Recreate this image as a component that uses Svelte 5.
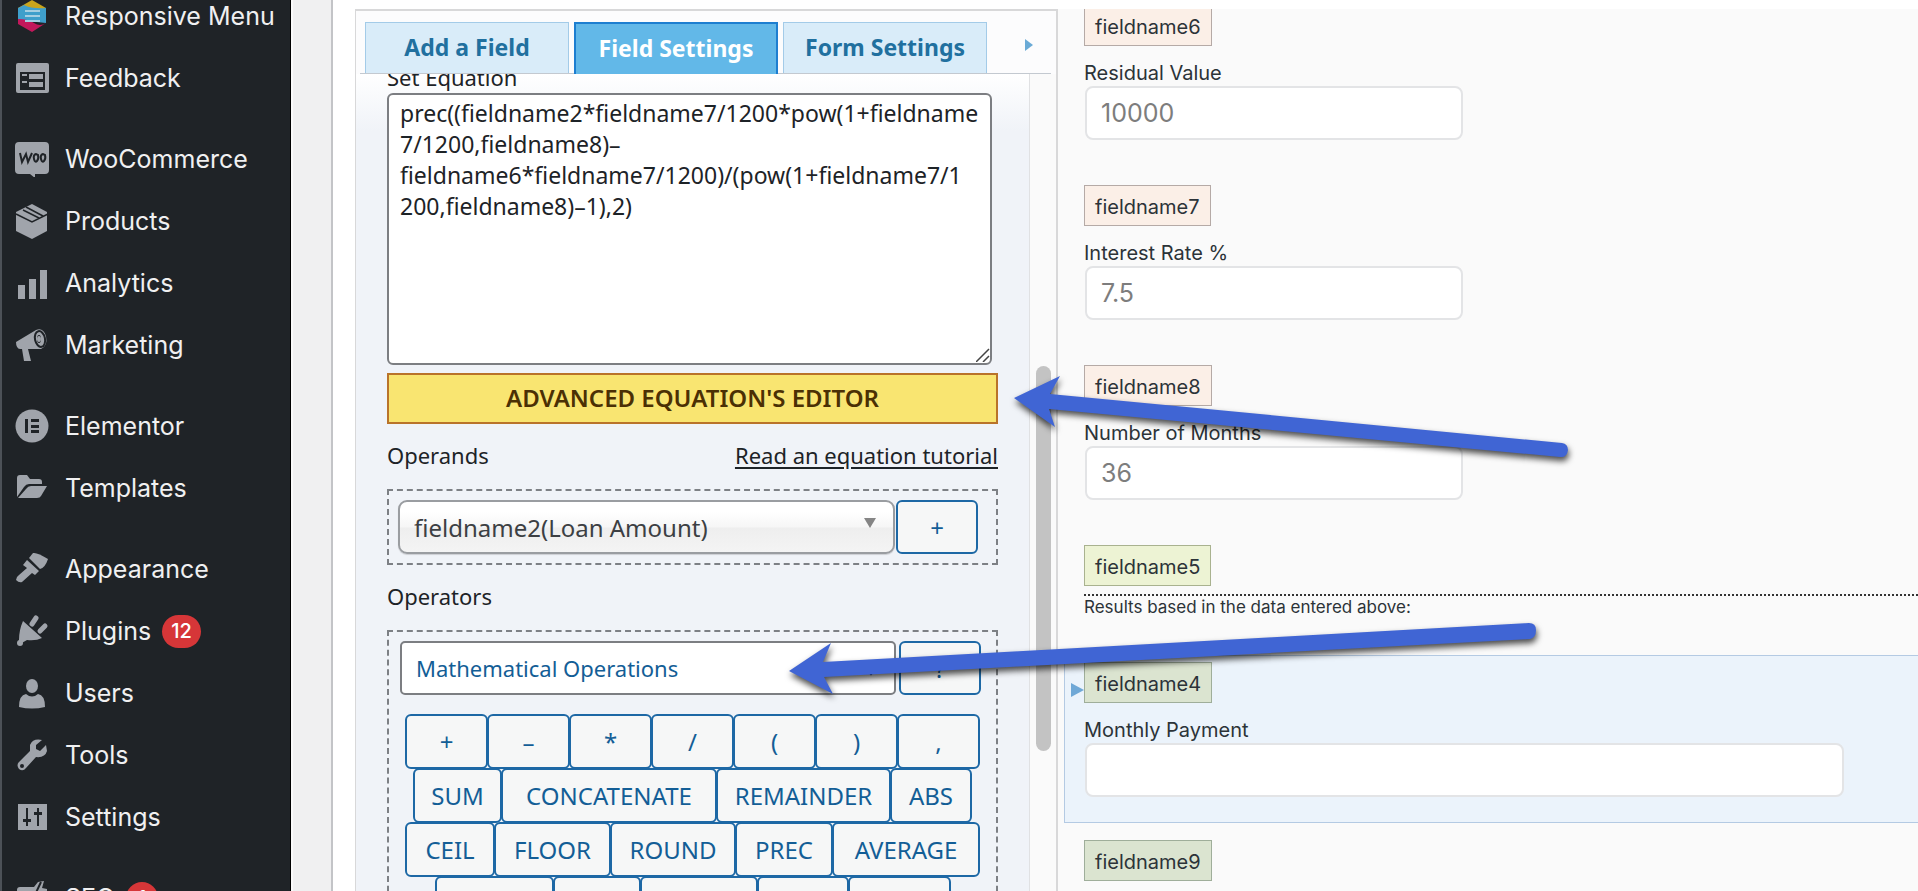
<script>
  const menu = [
    [
      { icon: 'responsive', label: 'Responsive Menu' },
      { icon: 'feedback', label: 'Feedback' }
    ],
    [
      { icon: 'woo', label: 'WooCommerce' },
      { icon: 'box', label: 'Products' },
      { icon: 'bars', label: 'Analytics' },
      { icon: 'horn', label: 'Marketing' }
    ],
    [
      { icon: 'elementor', label: 'Elementor' },
      { icon: 'folder', label: 'Templates' }
    ],
    [
      { icon: 'brush', label: 'Appearance' },
      { icon: 'plug', label: 'Plugins', count: '12' },
      { icon: 'user', label: 'Users' },
      { icon: 'wrench', label: 'Tools' },
      { icon: 'sliders', label: 'Settings' }
    ],
    [{ icon: 'seo', label: 'SEO', count: '1' }]
  ];

  const equation =
    'prec((fieldname2*fieldname7/1200*pow(1+fieldname\n7/1200,fieldname8)–\nfieldname6*fieldname7/1200)/(pow(1+fieldname7/1\n200,fieldname8)–1),2)';

  const operatorRows = [
    [['+', 83], ['–', 83], ['*', 83], ['/', 83], ['(', 83], [')', 83], [',', 83]],
    [['SUM', 89], ['CONCATENATE', 216], ['REMAINDER', 175], ['ABS', 82]],
    [['CEIL', 90], ['FLOOR', 117], ['ROUND', 126], ['PREC', 98], ['AVERAGE', 148]],
    [['CDATE', 119], ['LOG', 88], ['POW', 118], ['SQRT', 92], ['MAX', 103]]
  ];

  const inputs = [
    { name: 'fieldname6', label: 'Residual Value', hint: '10000' },
    { name: 'fieldname7', label: 'Interest Rate %', hint: '7.5' },
    { name: 'fieldname8', label: 'Number of Months', hint: '36' }
  ];
</script>

{#snippet glyph(name)}
  <svg class="icon" viewBox="0 0 36 36" aria-hidden="true">
    {#if name === 'responsive'}
      <path fill="#c9a51c" d="M18 2 32 10V14H4V10Z" />
      <path fill="#3f9fcb" d="M4 10 10 7Q18 11 32 10V25L4 22Z" />
      <path fill="#c2185b" d="M4 21Q14 21 20 25T32 25L18 34 4 26Z" />
      <path stroke="#a5cfe2" stroke-width="2" d="M11 13h15M11 18h15M11 23h15" />
    {:else if name === 'feedback'}
      <rect x="2" y="3" width="33" height="30" rx="2" />
      <path class="cut" d="M6 12h25v18H6z" />
      <path d="M8 14h5v2H8zM8 21h5v2H8zM15 14h14v5H15zM15 22h14v5H15z" />
    {:else if name === 'woo'}
      <path d="M5 1h26q4 0 4 4v24q0 4-4 4H21v4l-5-4H5q-4 0-4-4V5q0-4 4-4z" />
      <path
        class="line"
        d="M6 12l2 9 4-8 2 8 4-9M22 13q-3 1-2 5t3 2 1-6zM29 13q-3 1-2 5t3 2 1-6z"
        stroke-width="2"
      />
    {:else if name === 'box'}
      <path d="M18 1 33 9V28L18 36 2 28V9Z" />
      <path class="line" stroke-width="1.5" d="M2 11 18 19 34 11M9 7 25 15M12 4 29 13" />
    {:else if name === 'bars'}
      <path d="M4 20h7v14H4zM15 14h7v20h-7zM26 5h7v29h-7z" />
    {:else if name === 'horn'}
      <path d="M2 15 22 3Q29 0 32 9 34 19 27 22L14 22 17 34H10L8 22Q2 23 2 15Z" />
      <ellipse class="line" cx="26" cy="12" rx="5" ry="8" stroke-width="2" transform="rotate(-12 26 12)" />
      <ellipse class="cut" cx="25" cy="12" rx="2" ry="4" />
      <ellipse cx="25" cy="12" rx="2" ry="3" />
    {:else if name === 'elementor'}
      <circle cx="18" cy="18" r="16.500" />
      <path class="cut" d="M11 11h3v14h-3zM17 11h8v3h-8zM17 17h8v3h-8zM17 22h8v3h-8z" />
    {:else if name === 'folder'}
      <path d="M3 27V8q0-3 3-3h7l3 4h9q3 0 3 3v2H15q-3 0-5 3Z" />
      <path d="M4 28 12 19q2-3 5-3h16l-6 10q-1 2-4 2Z" />
    {:else if name === 'brush'}
      <path d="M15 7 19 2Q23 1 34 8 31 17 26 18Z" />
      <path d="M13 9 25 20 21 24 18 22 8 31Q5 32 2 29 2 26 5 24L13 17 9 14Z" />
    {:else if name === 'plug'}
      <path d="M9 8 28 25Q22 28 13 27L6 31Q3 31 5 27Q5 17 9 8Z" />
      <path stroke="#a0a4ab" stroke-width="5" stroke-linecap="round" d="M18 11 22 5M26 18 31 13" />
      <circle cx="6" cy="30" r="3" />
    {:else if name === 'user'}
      <ellipse cx="18" cy="11" rx="6" ry="7" />
      <path d="M5 32q0-12 7-13 6 5 12 0 7 1 7 13-13 3-26 0z" />
    {:else if name === 'wrench'}
      <path d="M32 8 26 14 22 12 22 8 28 3Q19 1 16 8V14L5 25Q2 28 5 32 9 35 12 31L22 20Q31 21 33 14Z" />
      <circle class="cut" cx="8" cy="29" r="2" />
    {:else if name === 'sliders'}
      <path d="M4 5h29v26H4z" />
      <path class="line" stroke-width="2" d="M13 9v18M24 9v18" />
      <path class="cut" d="M9 20h8v3H9zM20 13h8v3h-8z" />
    {:else}
      <path d="M6 7H20L24 2 30 1 28 8 33 9V36H3V10Q3 7 6 7Z" />
      <path class="line" stroke-width="2" d="M27 2 19 19M10 13l4 1" />
    {/if}
  </svg>
{/snippet}

<div class="app">
  <nav class="sidebar" aria-label="Admin menu">
    {#each menu as group}
      <ul>
        {#each group as item}
          <li>
            <a href="#{item.icon}">
              {@render glyph(item.icon)}
              <span>{item.label}</span>
              {#if item.count}<b class="count">{item.count}</b>{/if}
            </a>
          </li>
        {/each}
      </ul>
    {/each}
  </nav>

  <main class="builder">
    <section class="controls">
      <div class="tabs" role="tablist">
        <button role="tab" aria-selected="false">Add a Field</button>
        <button role="tab" aria-selected="true" class="active">Field Settings</button>
        <button role="tab" aria-selected="false">Form Settings</button>
        <button class="next" aria-label="More tabs">
          <svg viewBox="0 0 8 12"><path d="M0 0 8 6 0 12Z" fill="#6aaad6" /></svg>
        </button>
      </div>

      <div class="scroller">
        <div class="settings">
          <label class="eq-label" for="equation">Set Equation</label>
          <div class="eq-box">
            <textarea id="equation" spellcheck="false" value={equation}></textarea>
            <svg class="grip" viewBox="0 0 14 14" aria-hidden="true">
              <path d="M0 14 13 1M7 14 13 8" stroke="#444" stroke-width="1.5" />
            </svg>
          </div>
          <button class="editor">ADVANCED EQUATION'S EDITOR</button>

          <div class="heading">
            <label for="operand">Operands</label>
            <a href="#tutorial">Read an equation tutorial</a>
          </div>
          <div class="dashed">
            <div class="pick">
              <div class="drop">
                <select id="operand" class="operand"><option>fieldname2(Loan Amount)</option></select>
                <svg class="caret" viewBox="0 0 12 10" aria-hidden="true"><path d="M0 0H12L6 10Z" fill="#858585" /></svg>
              </div>
              <button class="op small">+</button>
            </div>
          </div>

          <div class="heading"><label for="operator">Operators</label></div>
          <div class="dashed">
            <div class="pick group">
              <div class="drop">
                <select id="operator" class="operator"><option>Mathematical Operations</option></select>
                <svg class="caret low" viewBox="0 0 12 10" aria-hidden="true">
                  <path d="M1 2 6 7 11 2" fill="none" stroke="#1d2327" stroke-width="2" />
                </svg>
              </div>
              <button class="op small">?</button>
            </div>
            <div class="ops">
              {#each operatorRows as row}
                <div class="op-row">
                  {#each row as [text, width]}
                    <button class="op" style:width="{width}px">{text}</button>
                  {/each}
                </div>
              {/each}
            </div>
          </div>
        </div>
        <div class="track"><div class="thumb"></div></div>
      </div>
    </section>

    <section class="preview">
      <div class="fields">
        {#each inputs as field}
          <div class="field">
            <span class="tag peach">{field.name}</span>
            <label for={field.name}>{field.label}</label>
            <input id={field.name} type="text" placeholder={field.hint} />
          </div>
        {/each}
        <div class="field summary">
          <span class="tag lime">fieldname5</span>
          <p>Results based in the data entered above:</p>
        </div>
        <div class="field selected">
          <svg class="marker" viewBox="0 0 13 14" aria-hidden="true"><path d="M0 0 13 7 0 14Z" fill="#6fa8d6" /></svg>
          <span class="tag green">fieldname4</span>
          <label for="fieldname4">Monthly Payment</label>
          <input id="fieldname4" class="wide" type="text" />
        </div>
        <div class="field">
          <span class="tag green">fieldname9</span>
        </div>
      </div>
    </section>
  </main>

  <svg class="arrows" viewBox="0 0 1918 891" aria-hidden="true">
    <path d="M1014 398 1060 376 1050 394 1562 443Q1568 444 1568 450 1567 458 1560 457L1049 409 1055 427Z" />
    <path d="M789 671 831 643 823 662 1529 623Q1536 623 1536 630 1536 638 1530 639L824 677 833 694Z" />
  </svg>
</div>

<style>
  :global(body) {
    margin: 0;
    overflow: hidden;
  }
  .app,
  .app * {
    box-sizing: border-box;
  }
  .app {
    position: relative;
    display: flex;
    height: 100vh;
    overflow: hidden;
    background: #f0f0f1;
    color: #1d2327;
    font-family: Inter, sans-serif;
  }
  button,
  select,
  input,
  textarea {
    font-family: inherit;
    margin: 0;
  }
  svg {
    display: block;
  }

  .sidebar {
    flex: none;
    width: 291px;
    margin-right: 40px;
    border-left: 2px solid #4c5157;
    border-right: 1px solid #000;
    background: #1f2327;
    box-shadow: 2px 0 0 #fafafa;
    overflow: hidden;
  }
  .sidebar ul {
    list-style: none;
    margin: 0 0 19px;
    padding: 0;
  }
  .sidebar ul:first-child {
    margin-top: -15px;
  }
  .sidebar a {
    display: flex;
    align-items: center;
    height: 62px;
    padding-left: 12px;
    color: #f0f0f1;
    font-size: 25px;
    line-height: 32px;
    text-decoration: none;
    white-space: nowrap;
  }
  .icon {
    flex: none;
    width: 36px;
    height: 36px;
    margin-right: 15px;
    fill: #a0a4ab;
  }
  .icon .cut {
    fill: #1f2327;
  }
  .icon .line {
    fill: none;
    stroke: #1f2327;
  }
  .count {
    min-width: 32px;
    height: 33px;
    margin-left: 11px;
    padding: 0 9px;
    border-radius: 17px;
    background: #d63638;
    color: #fff;
    font-size: 20px;
    font-weight: 500;
    line-height: 33px;
    text-align: center;
  }

  .builder {
    flex: 1;
    min-width: 0;
    display: grid;
    grid-template-columns: minmax(0, 702fr) minmax(0, 861fr);
    grid-template-rows: minmax(0, 1fr);
    padding: 9px 0 0 22px;
    border-left: 2px solid #c3c4c7;
    background: #fff;
  }
  .controls {
    display: flex;
    flex-direction: column;
    border: 2px solid #d8d8d9;
    border-width: 2px 1px 0 1px;
    background: #fcfcfd;
    font-family: "Noto Sans", sans-serif;
  }
  .tabs {
    flex: none;
    display: flex;
    gap: 5px;
    height: 63px;
    margin: 0 5px 0 4px;
    padding: 11px 0 0 5px;
    border-bottom: 1px solid #c3c9d0;
  }
  .tabs button {
    flex: 0 1 204px;
    height: 51px;
    padding: 0 0 3px;
    border: 1px solid #a3cbe8;
    border-bottom: 0;
    background: #d9ecf9;
    color: #21709f;
    font-size: 23px;
    font-weight: 700;
    white-space: nowrap;
  }
  .tabs .active {
    height: 52px;
    border: 2px solid #1d7ed0;
    border-bottom: 0;
    background: #62b8e8;
    color: #fff;
  }
  .tabs .next {
    flex: none;
    width: 8px;
    height: 12px;
    margin: 17px 0 0 33px;
    padding: 0;
    border: 0;
    background: none;
  }
  .next svg {
    width: 8px;
    height: 12px;
  }

  .scroller {
    flex: 1;
    min-height: 0;
    display: flex;
    overflow: hidden;
  }
  .settings {
    flex: 1;
    min-width: 0;
    margin-top: -13px;
    padding: 0 31px;
    background: linear-gradient(#fff 12px, #f0f3f8 70px);
    font-size: 22px;
  }
  .track {
    flex: none;
    width: 27px;
    padding: 292px 5px 0 6px;
    border-left: 1px solid #e0e1e3;
    background: #fafafa;
  }
  .thumb {
    height: 385px;
    border-radius: 8px;
    background: #c3c3c3;
  }
  .eq-label {
    display: block;
    height: 32px;
    line-height: 32px;
  }
  .eq-box {
    position: relative;
    margin-right: 6px;
  }
  textarea {
    display: block;
    width: 100%;
    height: 272px;
    padding: 3px 11px;
    border: 2px solid #7c7e82;
    border-radius: 6px;
    background: #fff;
    color: #1d2327;
    font-size: 23px;
    line-height: 31px;
    white-space: pre;
    overflow: hidden;
    resize: none;
  }
  .grip {
    position: absolute;
    right: 2px;
    bottom: 3px;
    width: 14px;
    height: 14px;
  }
  .editor {
    display: block;
    width: 100%;
    height: 51px;
    margin-top: 8px;
    padding: 0 0 3px;
    border: 2px solid #b9732a;
    background: #f9e571;
    color: #4b3004;
    font-size: 24px;
    font-weight: 600;
  }
  .heading {
    display: flex;
    justify-content: space-between;
    height: 65px;
    padding-top: 15px;
    line-height: 32px;
  }
  .heading a {
    color: inherit;
    text-underline-offset: 3px;
  }
  .dashed {
    border: 2px dashed #7d8085;
    padding: 9px;
  }
  .pick {
    display: flex;
    gap: 1px;
    height: 54px;
    padding-right: 9px;
  }
  .pick.group {
    gap: 3px;
    padding: 0 6px 0 2px;
  }
  .drop {
    position: relative;
    flex: 1;
    min-width: 0;
  }
  .drop select {
    width: 100%;
    height: 54px;
    padding: 0 14px;
    appearance: none;
    font-size: 22px;
  }
  .drop .operand {
    border: 2px solid #9a9da1;
    border-radius: 9px;
    background: linear-gradient(#fff 20%, #f6f6f6 50%, #eee 52%, #f4f4f4);
    box-shadow: 0 1px 1px rgba(0, 0, 0, 0.15);
    color: #3c3f43;
    font-size: 24px;
  }
  .operator {
    border: 2px solid #7c7e82;
    border-radius: 5px;
    background: #fff;
    color: #135e96;
  }
  .caret {
    position: absolute;
    top: 18px;
    right: 19px;
    width: 12px;
    height: 10px;
    pointer-events: none;
  }
  .caret.low {
    top: 26px;
  }
  .op {
    flex: none;
    height: 55px;
    padding: 0;
    border: 2px solid #1d68a5;
    border-radius: 6px;
    background: #f6f7f7;
    color: #135e96;
    font-size: 24px;
  }
  .op.small {
    width: 82px;
    height: 54px;
  }
  .ops {
    display: flex;
    flex-direction: column;
    padding-top: 19px;
  }
  .op-row {
    display: flex;
    justify-content: center;
    margin-bottom: -1px;
  }
  .op-row .op + .op {
    margin-left: -1px;
  }

  .preview {
    min-width: 0;
    overflow: hidden;
    border-left: 1px solid #d8d8d9;
    background: #fafafa;
    color: #2c3338;
  }
  .fields {
    margin: -4px 0 0 6px;
  }
  .field {
    display: flex;
    flex-direction: column;
    align-items: flex-start;
    height: 180px;
    padding-left: 20px;
  }
  .tag {
    height: 41px;
    padding: 2px 10px 0;
    border: 1px solid #b5aaa6;
    font-size: 20px;
    line-height: 38px;
  }
  .peach {
    background: #fbefe7;
  }
  .lime {
    border-color: #a9b28f;
    background: #edf3d4;
  }
  .green {
    border-color: #9fae9a;
    background: #dbe4d0;
  }
  .field label {
    margin: 15px 0 1px;
    font-size: 20px;
    line-height: 24px;
  }
  .field input {
    width: 378px;
    max-width: 100%;
    height: 54px;
    margin-left: 1px;
    padding: 0 14px;
    border: 2px solid #e3e4e6;
    border-radius: 8px;
    background: #fff;
    font-size: 25px;
  }
  .field input::placeholder {
    color: #7d7d7d;
    opacity: 1;
  }
  .field .wide {
    width: 91%;
  }
  .summary {
    height: 110px;
  }
  .summary p {
    align-self: stretch;
    margin: 8px 0 0;
    border-top: 2px dotted #333;
    font-size: 17px;
    line-height: 22px;
  }
  .selected {
    position: relative;
    height: 168px;
    margin-bottom: 17px;
    padding: 6px 0 0 19px;
    border: 1px solid #b4cae3;
    border-right: 0;
    background: #ebf3fb;
  }
  .marker {
    position: absolute;
    left: 6px;
    top: 27px;
    width: 13px;
    height: 14px;
  }

  .arrows {
    position: absolute;
    inset: 0;
    width: 100%;
    height: 100%;
    pointer-events: none;
    fill: #4065d4;
    filter: drop-shadow(1px 4px 3px rgba(0, 0, 0, 0.7));
  }
</style>
